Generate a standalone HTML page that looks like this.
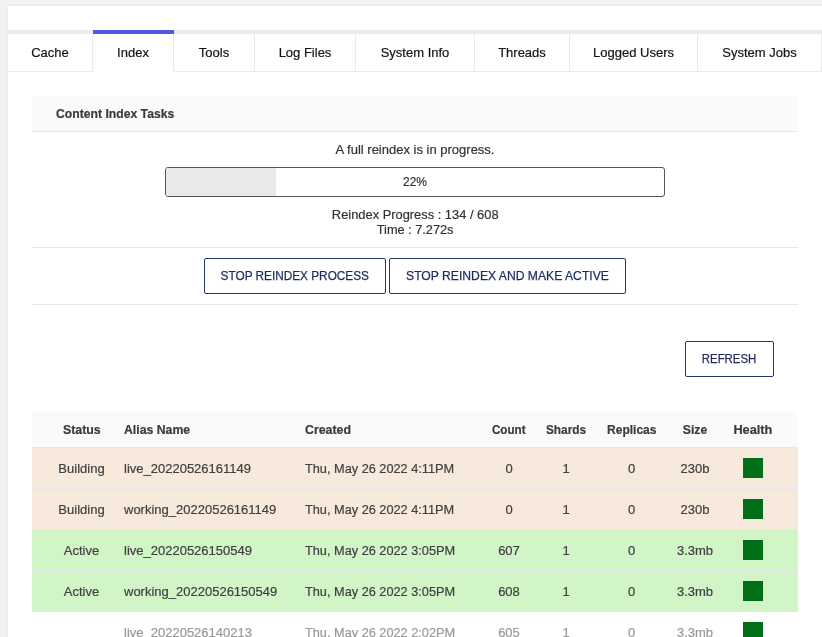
<!DOCTYPE html>
<html>
<head>
<meta charset="utf-8">
<style>
html,body{margin:0;padding:0;}
body{width:822px;height:637px;overflow:hidden;background:#f0f2f3;font-family:"Liberation Sans",sans-serif;position:relative;color:#333;}
.root{position:absolute;left:0;top:0;width:822px;height:637px;will-change:transform;-webkit-text-stroke:0.2px currentColor;}
.panel{position:absolute;left:8px;top:6px;width:830px;height:700px;background:#fff;box-shadow:0 0 3px rgba(60,70,80,0.09);}
.tabbar{position:absolute;left:8px;top:30px;width:830px;height:4px;background:#e9eaec;}
.tab{position:absolute;top:34px;height:37px;border-right:1px solid #e9eaec;border-bottom:1px solid #e9eaec;font-size:13px;color:#141414;text-align:center;line-height:37px;white-space:nowrap;}
.tab.active{border-bottom-color:transparent;}
.tab.active::before{content:"";position:absolute;left:0;top:-4px;right:-1px;height:4px;background:#5159dd;}
.hdr{position:absolute;left:32px;top:96px;width:766px;height:35px;background:#f9fafa;border-bottom:1px solid #e6e7e9;}
.c{position:absolute;left:32px;width:766px;text-align:center;font-size:13px;color:#333;line-height:15px;white-space:nowrap;}
.bar{position:absolute;left:165px;top:167px;width:498px;height:28px;border:1px solid #555;border-radius:3px;background:#fff;overflow:hidden;}
.bar .fill{position:absolute;left:0;top:0;width:110px;height:28px;background:#e8e9eb;}
.bar .lbl{position:absolute;left:0;top:0;width:498px;text-align:center;line-height:28px;font-size:13px;color:#333;}
.hr{position:absolute;left:32px;width:766px;height:1px;background:#e9e9eb;}
.btn{position:absolute;height:34px;border:1px solid #28356a;border-radius:2px;background:#fff;color:#1f2b5e;-webkit-text-stroke:0.25px currentColor;font-size:13px;line-height:34px;text-align:center;white-space:nowrap;}
.thead{position:absolute;left:32px;top:412px;width:766px;height:35px;background:#f9fafa;border-bottom:1px solid #e6e7e9;}
.row{position:absolute;left:32px;width:766px;height:40px;border-bottom:1px solid #e6e7ea;}
.b{background:#f7e9dc;}
.g{background:#d2f5c8;}
.t{position:absolute;white-space:nowrap;font-size:13px;}
.th{font-weight:bold;color:#3a3a3a;line-height:35px;top:0;}
.td{line-height:40px;top:1px;color:#404040;}
.sq{position:absolute;left:711px;top:10px;width:20px;height:20px;background:#006f17;}
.grey .td{color:#9a9a9a;}
.sx{display:inline-block;}
</style>
</head>
<body>
<div class="root">
<div class="panel"></div>
<div class="tabbar"></div>
<div class="tab" style="left:8px;width:84px;">Cache</div>
<div class="tab active" style="left:93px;width:80px;">Index</div>
<div class="tab" style="left:174px;width:80px;">Tools</div>
<div class="tab" style="left:255px;width:100px;">Log Files</div>
<div class="tab" style="left:356px;width:118px;">System Info</div>
<div class="tab" style="left:475px;width:94px;">Threads</div>
<div class="tab" style="left:570px;width:127px;">Logged Users</div>
<div class="tab" style="left:698px;width:123px;">System Jobs</div>
<div class="hdr"><span class="t th" style="left:24px;"><span class="sx" style="transform:scaleX(0.937);transform-origin:left;">Content Index Tasks</span></span></div>
<div class="c" style="top:142px;">A full reindex is in progress.</div>
<div class="bar"><div class="fill"></div><div class="lbl"><span class="sx" style="transform:scaleX(0.92);transform-origin:center;">22%</span></div></div>
<div class="c" style="top:207px;"><span class="sx" style="transform:scaleX(0.99);transform-origin:center;">Reindex Progress : 134 / 608</span></div>
<div class="c" style="top:222px;"><span class="sx" style="transform:scaleX(0.98);transform-origin:center;">Time : 7.272s</span></div>
<div class="hr" style="top:247px;"></div>
<div class="btn" style="left:204px;top:258px;width:180px;"><span class="sx" style="transform:scaleX(0.907);transform-origin:center;">STOP REINDEX PROCESS</span></div>
<div class="btn" style="left:389px;top:258px;width:235px;"><span class="sx" style="transform:scaleX(0.935);transform-origin:center;">STOP REINDEX AND MAKE ACTIVE</span></div>
<div class="hr" style="top:304px;"></div>
<div class="btn" style="left:685px;top:341px;width:87px;"><span class="sx" style="transform:scaleX(0.879);transform-origin:center;">REFRESH</span></div>
<div class="thead"><span class="t th" style="left:-10.5px;width:120px;text-align:center;"><span class="sx" style="transform:scaleX(0.95);transform-origin:center;">Status</span></span><span class="t th" style="left:92px;"><span class="sx" style="transform:scaleX(0.943);transform-origin:left;">Alias Name</span></span><span class="t th" style="left:273px;"><span class="sx" style="transform:scaleX(0.95);transform-origin:left;">Created</span></span><span class="t th" style="left:417.0px;width:120px;text-align:center;"><span class="sx" style="transform:scaleX(0.895);transform-origin:center;">Count</span></span><span class="t th" style="left:474.0px;width:120px;text-align:center;"><span class="sx" style="transform:scaleX(0.91);transform-origin:center;">Shards</span></span><span class="t th" style="left:539.5px;width:120px;text-align:center;"><span class="sx" style="transform:scaleX(0.925);transform-origin:center;">Replicas</span></span><span class="t th" style="left:603.0px;width:120px;text-align:center;"><span class="sx" style="transform:scaleX(0.94);transform-origin:center;">Size</span></span><span class="t th" style="left:660.5px;width:120px;text-align:center;"><span class="sx" style="transform:scaleX(0.98);transform-origin:center;">Health</span></span></div>
<div class="row b" style="top:448px;"><span class="t td" style="left:-10.5px;width:120px;text-align:center;">Building</span><span class="t td" style="left:92px;">live_20220526161149</span><span class="t td" style="left:273px;"><span class="sx" style="transform:scaleX(0.98);transform-origin:left;">Thu, May 26 2022 4:11PM</span></span><span class="t td" style="left:417.0px;width:120px;text-align:center;">0</span><span class="t td" style="left:474.0px;width:120px;text-align:center;">1</span><span class="t td" style="left:539.5px;width:120px;text-align:center;">0</span><span class="t td" style="left:603.0px;width:120px;text-align:center;">230b</span><div class="sq"></div></div>
<div class="row b" style="top:489px;"><span class="t td" style="left:-10.5px;width:120px;text-align:center;">Building</span><span class="t td" style="left:92px;">working_20220526161149</span><span class="t td" style="left:273px;"><span class="sx" style="transform:scaleX(0.98);transform-origin:left;">Thu, May 26 2022 4:11PM</span></span><span class="t td" style="left:417.0px;width:120px;text-align:center;">0</span><span class="t td" style="left:474.0px;width:120px;text-align:center;">1</span><span class="t td" style="left:539.5px;width:120px;text-align:center;">0</span><span class="t td" style="left:603.0px;width:120px;text-align:center;">230b</span><div class="sq"></div></div>
<div class="row g" style="top:530px;"><span class="t td" style="left:-10.5px;width:120px;text-align:center;">Active</span><span class="t td" style="left:92px;">live_20220526150549</span><span class="t td" style="left:273px;"><span class="sx" style="transform:scaleX(0.98);transform-origin:left;">Thu, May 26 2022 3:05PM</span></span><span class="t td" style="left:417.0px;width:120px;text-align:center;">607</span><span class="t td" style="left:474.0px;width:120px;text-align:center;">1</span><span class="t td" style="left:539.5px;width:120px;text-align:center;">0</span><span class="t td" style="left:603.0px;width:120px;text-align:center;">3.3mb</span><div class="sq"></div></div>
<div class="row g" style="top:571px;"><span class="t td" style="left:-10.5px;width:120px;text-align:center;">Active</span><span class="t td" style="left:92px;">working_20220526150549</span><span class="t td" style="left:273px;"><span class="sx" style="transform:scaleX(0.98);transform-origin:left;">Thu, May 26 2022 3:05PM</span></span><span class="t td" style="left:417.0px;width:120px;text-align:center;">608</span><span class="t td" style="left:474.0px;width:120px;text-align:center;">1</span><span class="t td" style="left:539.5px;width:120px;text-align:center;">0</span><span class="t td" style="left:603.0px;width:120px;text-align:center;">3.3mb</span><div class="sq"></div></div>
<div class="row grey" style="top:612px;border-bottom:none;"><span class="t td" style="left:92px;">live_20220526140213</span><span class="t td" style="left:273px;"><span class="sx" style="transform:scaleX(0.98);transform-origin:left;">Thu, May 26 2022 2:02PM</span></span><span class="t td" style="left:417.0px;width:120px;text-align:center;">605</span><span class="t td" style="left:474.0px;width:120px;text-align:center;">1</span><span class="t td" style="left:539.5px;width:120px;text-align:center;">0</span><span class="t td" style="left:603.0px;width:120px;text-align:center;">3.3mb</span><div class="sq"></div></div>
</div>
</body>
</html>
